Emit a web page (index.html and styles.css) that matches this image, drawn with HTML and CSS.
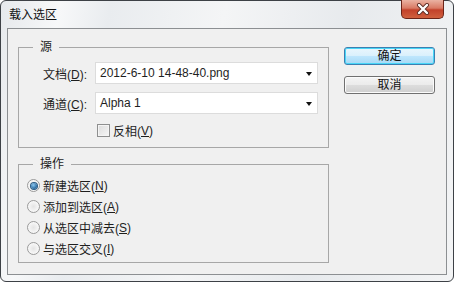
FILE: index.html
```html
<!DOCTYPE html>
<html lang="zh-CN">
<head>
    <meta charset="UTF-8">
    <title>载入选区</title>
    <link rel="stylesheet" href="styles.css">
</head>
<body>

    <!-- Dialog window -->
    <div class="window">

        <div class="titlebar">
            <span class="title">载入选区</span>
            <span class="close">
                <svg width="14" height="12" viewBox="0 0 14 12">
                    <path d="M3 2 L11 10 M11 2 L3 10" stroke="#5a2a22" stroke-width="4" stroke-linecap="round"/>
                    <path d="M3 2 L11 10 M11 2 L3 10" stroke="#ffffff" stroke-width="2.4" stroke-linecap="round"/>
                </svg>
            </span>
        </div>

        <div class="client">

            <div class="groups">

                <!-- Source group -->
                <div class="group source">
                    <div class="legend">源</div>
                    <div class="row first">
                        <span class="label">文档(<u>D</u>):</span>
                        <div class="combo"><span class="value">2012-6-10 14-48-40.png</span><span class="arrow"></span></div>
                    </div>
                    <div class="row">
                        <span class="label">通道(<u>C</u>):</span>
                        <div class="combo"><span class="value">Alpha 1</span><span class="arrow"></span></div>
                    </div>
                    <div class="check"><span class="box"></span>反相(<u>V</u>)</div>
                </div>

                <!-- Operation group -->
                <div class="group operation">
                    <div class="legend">操作</div>
                    <div class="radio first on"><span class="dot"></span>新建选区(<u>N</u>)</div>
                    <div class="radio"><span class="dot"></span>添加到选区(<u>A</u>)</div>
                    <div class="radio"><span class="dot"></span>从选区中减去(<u>S</u>)</div>
                    <div class="radio"><span class="dot"></span>与选区交叉(<u>I</u>)</div>
                </div>

            </div>

            <div class="buttons">
                <button class="btn default">确定</button>
                <button class="btn">取消</button>
            </div>

        </div>
    </div>

</body>
</html>
```

FILE: styles.css
```css
/* General */

body {
    margin: 0;
    font-family: "Liberation Sans", "Noto Sans CJK SC", sans-serif;
    font-size: 12px;
    color: #1e1e1e;
}

u {
    text-decoration: underline;
    text-underline-offset: 1px;
}

/* Window frame */

.window {
    width: 454px;
    height: 282px;
    box-sizing: border-box;
    border: 1px solid #3d4146;
    border-radius: 6px;
    padding: 0 6px 6px 6px;
    display: flex;
    flex-direction: column;
    background: linear-gradient(100deg, #e6e9ec 0%, #f7f8f9 12%, #e9ecef 22%, #f4f5f6 45%, #e7eaed 70%, #f3f4f5 100%);
}

.titlebar {
    height: 27px;
    display: flex;
    align-items: flex-start;
}

.title {
    margin-top: 7px;
    margin-left: 2px;
    line-height: 15px;
    font-size: 12px;
    color: #111;
}

.close {
    margin-left: auto;
    margin-right: 3px;
    margin-top: -1px;
    width: 43px;
    height: 19px;
    box-sizing: border-box;
    border: 1px solid #6b2418;
    border-top: none;
    border-radius: 0 0 5px 5px;
    background: linear-gradient(#eab2a2 0%, #d97a64 45%, #c2412a 55%, #d0603e 100%);
    display: flex;
    align-items: center;
    justify-content: center;
}

/* Client area */

.client {
    flex: 1;
    border: 1px solid #8c8f92;
    background-color: #f0f0f0;
    display: flex;
    padding: 18px 0 0 10px;
}

.groups {
    width: 311px;
}

.group {
    border: 1px solid #a7a7a7;
    display: flex;
    flex-direction: column;
    box-sizing: border-box;
}

.source {
    height: 101px;
}

.operation {
    height: 99px;
    margin-top: 16px;
}

.legend {
    align-self: flex-start;
    margin-top: -8px;
    margin-left: 14px;
    padding: 0 7px;
    line-height: 15px;
    background-color: #f0f0f0;
}

/* Combo rows */

.row {
    display: flex;
    align-items: center;
    height: 22px;
    padding-left: 24px;
    margin-top: 8px;
}

.row.first {
    margin-top: 7px;
}

.label {
    width: 52px;
}

.combo {
    width: 223px;
    height: 22px;
    box-sizing: border-box;
    border: 1px solid #dcdcdc;
    background-color: #fff;
    display: flex;
    align-items: center;
    padding: 0 5px 0 4px;
}

.value {
    flex: 1;
}

.arrow {
    width: 0;
    height: 0;
    border-left: 3.5px solid transparent;
    border-right: 3.5px solid transparent;
    border-top: 4px solid #111;
    margin-top: 2px;
}

/* Checkbox */

.check {
    display: flex;
    align-items: center;
    height: 13px;
    margin-top: 10px;
    margin-left: 78px;
}

.box {
    width: 13px;
    height: 13px;
    box-sizing: border-box;
    border: 1px solid #8e8f8f;
    background: linear-gradient(135deg, #dcdcdc, #f6f6f6);
    box-shadow: inset 0 0 0 1px #f4f4f4;
    margin-right: 3px;
}

/* Radios */

.radio {
    display: flex;
    align-items: center;
    height: 21px;
    margin-left: 8px;
}

.radio.first {
    margin-top: 3px;
}

.dot {
    width: 13px;
    height: 13px;
    box-sizing: border-box;
    border-radius: 50%;
    border: 1px solid #9a9a9a;
    background: radial-gradient(circle, #e4e4e4 0, #f8f8f8 70%);
    margin-right: 3px;
    display: flex;
    align-items: center;
    justify-content: center;
}

.radio.on .dot::after {
    content: "";
    width: 6px;
    height: 6px;
    border-radius: 50%;
    background: radial-gradient(circle at 40% 35%, #8cc8f0, #1d5f98 75%);
    box-shadow: 0 0 0 1px #2b5c85;
}

/* Buttons */

.buttons {
    margin-left: 15px;
    display: flex;
    flex-direction: column;
}

.btn {
    width: 91px;
    height: 18px;
    padding: 0;
    font-family: "Liberation Sans", "Noto Sans CJK SC", sans-serif;
    font-size: 12px;
    line-height: 14px;
    color: #111;
    border: 1px solid #707070;
    border-radius: 3px;
    background: linear-gradient(#f4f4f4 0%, #ebebeb 50%, #dddddd 51%, #cfcfcf 100%);
    box-shadow: inset 0 0 0 1px #fbfbfb;
}

.btn + .btn {
    margin-top: 11px;
}

.btn.default {
    border-color: #3c7fb1;
    background: linear-gradient(#eaf6fd 0%, #d9f0fc 50%, #bee6fd 51%, #a7d9f5 100%);
    box-shadow: inset 0 0 0 1px #48d6f7;
}
```
